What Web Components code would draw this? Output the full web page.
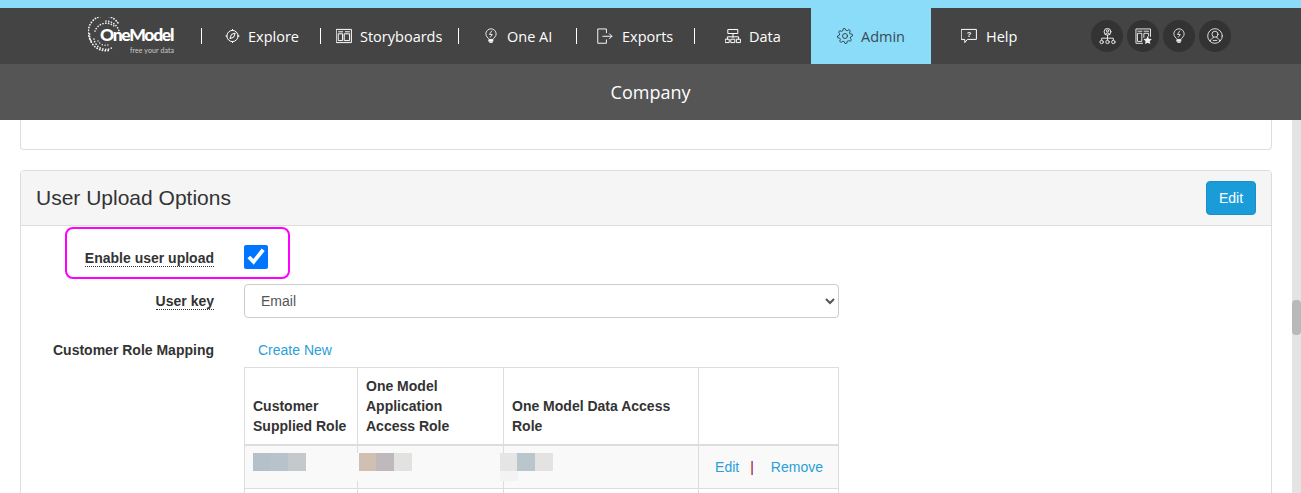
<!DOCTYPE html>
<html>
<head>
<meta charset="utf-8">
<title>Company</title>
<style>
  html, body { margin: 0; height: 493px; overflow: hidden; background: #fff; }
  body { font-family: "Liberation Sans", Arial, sans-serif; font-size: 14px; color: #333; }
</style>
</head>
<body>
<app-shell>
  <top-nav slot="nav">
    <one-logo></one-logo>
    <nav-item icon="explore" w="119" pad="23" gap="7" sep>Explore</nav-item>
    <nav-item icon="boards" w="138" pad="15" gap="8" sep>Storyboards</nav-item>
    <nav-item icon="bulb" w="118" pad="26" gap="10" sep>One AI</nav-item>
    <nav-item icon="exports" w="118" pad="20" gap="9" sep>Exports</nav-item>
    <nav-item icon="data" w="116" pad="30" gap="8">Data</nav-item>
    <nav-item icon="gear" w="120" pad="26" gap="8" active>Admin</nav-item>
    <nav-item icon="help" w="160" pad="30" gap="9">Help</nav-item>
    <round-icon icon="org"></round-icon>
    <round-icon icon="star"></round-icon>
    <round-icon icon="bulb"></round-icon>
    <round-icon icon="user"></round-icon>
  </top-nav>
  <sub-header slot="nav">Company</sub-header>

  <panel-card class="stub"></panel-card>

  <panel-card heading="User Upload Options">
    <e-btn slot="action">Edit</e-btn>
    <form-row label="Enable user upload" hint h="52" boxed>
      <input-check></input-check>
    </form-row>
    <form-row label="User key" hint h="34" mt="5">
      <select-box>Email</select-box>
    </form-row>
    <form-row label="Customer Role Mapping" h="20" mt="22">
      <a-link style="padding-left:14px">Create New</a-link>
    </form-row>
    <role-table></role-table>
  </panel-card>
</app-shell>

<script>
const strokeAttrs = 'fill="none" stroke="currentColor" stroke-width="1" stroke-linecap="round" stroke-linejoin="round"';

function gearPath(cx, cy, r1, r2, teeth) {
  let d = '';
  const step = Math.PI * 2 / teeth;
  for (let i = 0; i < teeth; i++) {
    const a = i * step - step / 2;
    const pts = [
      [r1, a + step * 0.0], [r2, a + step * 0.2], [r2, a + step * 0.5], [r1, a + step * 0.7]
    ];
    pts.forEach(([r, t], j) => {
      const x = (cx + r * Math.cos(t)).toFixed(2), y = (cy + r * Math.sin(t)).toFixed(2);
      d += (i === 0 && j === 0 ? 'M' : 'L') + x + ' ' + y + ' ';
    });
  }
  return d + 'Z';
}

const icons = {
  explore: `<svg width="16" height="16" viewBox="0 0 16 16" ${strokeAttrs}>
    <circle cx="7.5" cy="8" r="5.6"/><path d="M7.5 1.4v1M7.5 13.6v1M.9 8h1M13.1 8h1"/>
    <path d="M10.1 5.4 8.7 9.2 4.9 10.6 6.3 6.8Z"/></svg>`,
  boards: `<svg width="16" height="16" viewBox="0 0 16 16" ${strokeAttrs}>
    <rect x=".6" y="1.4" width="14.8" height="13.2"/><path d="M2.6 3.8h4M9.4 3.8h4"/>
    <rect x="2.6" y="5.8" width="4" height="6.8"/><rect x="8.6" y="5.8" width="5" height="6.8"/></svg>`,
  bulb: `<svg width="12" height="16" viewBox="0 0 14 18" ${strokeAttrs}>
    <path d="M4.4 12.6C3.8 10.8 1 9.8 1 6.6a6 6 0 0 1 12 0c0 3.2-2.8 4.2-3.4 6Z"/>
    <path d="M7.8 3.2 5.2 7.2h3.4L6.2 10.4"/>
    <path d="M4.8 13.6h4.4v1.6H4.8ZM5.6 16.6h2.8" fill="currentColor"/></svg>`,
  exports: `<svg width="16" height="16" viewBox="0 0 17 17" ${strokeAttrs}>
    <path d="M10 5V1H.8v15.2H10v-3.6"/><path d="M6.2 8.8h9.6M13.2 6.2l2.6 2.6-2.6 2.6"/></svg>`,
  data: `<svg width="16" height="16" viewBox="0 0 16 16" ${strokeAttrs}>
    <rect x="3.2" y="1.5" width="9.6" height="4"/><path d="M8 5.5v4M2.4 11V8.8h11.2V11"/>
    <rect x=".6" y="11.2" width="3.6" height="3.4"/><rect x="6.2" y="11.2" width="3.6" height="3.4"/><rect x="11.8" y="11.2" width="3.6" height="3.4"/></svg>`,
  gear: `<svg width="16" height="16" viewBox="0 0 16 16" ${strokeAttrs}>
    <path d="${gearPath(8, 8, 5.7, 7.5, 8)}"/><circle cx="8" cy="8" r="2.5"/></svg>`,
  help: `<svg width="16" height="16" viewBox="0 0 16 16" ${strokeAttrs}>
    <path d="M.6 1.4h14.8v10H6.4L3.8 14.6v-3.2H.6Z"/>
    <text x="8" y="8.8" text-anchor="middle" font-family="Liberation Sans" font-size="7.5" font-weight="700" fill="currentColor" stroke="none">?</text></svg>`,
  org: `<svg width="17" height="17" viewBox="0 0 18 18" ${strokeAttrs}>
    <circle cx="9" cy="4" r="3.6"/><circle cx="9" cy="3" r="1.2"/><path d="M6.6 6.4c.4-1.6 4.4-1.6 4.8 0"/>
    <path d="M9 7.6v5M2.8 12.6v-1.8h12.4v1.8"/>
    <circle cx="2.8" cy="14.8" r="1.8"/><circle cx="9" cy="14.8" r="1.8"/><circle cx="15.2" cy="14.8" r="1.8"/></svg>`,
  star: `<svg width="17" height="17" viewBox="0 0 18 18" ${strokeAttrs}>
    <path d="M8 16.2H1V1h15.4v8"/><path d="M3 3.4h4.4M9.6 3.4h4.8"/>
    <rect x="3" y="5.6" width="4.2" height="8.6"/><path d="M9.4 10V5.6h5v3"/>
    <path d="M13.4 8.4l1.4 2.9 3.1.4-2.3 2.2.6 3.1-2.8-1.5-2.8 1.5.6-3.1-2.3-2.2 3.1-.4Z" fill="currentColor" stroke="none"/></svg>`,
  user: `<svg width="16" height="16" viewBox="0 0 18 18" ${strokeAttrs}>
    <circle cx="9" cy="9" r="8.2"/><circle cx="9" cy="7" r="3.4"/>
    <path d="M3.6 14.6c.8-2.6 2.8-3.6 3.6-3.8M14.4 14.6c-.8-2.6-2.8-3.6-3.6-3.8"/><path d="M7 14h4"/></svg>`
};

class AppShell extends HTMLElement {
  constructor() {
    super();
    this.attachShadow({mode: 'open'}).innerHTML = `
      <style>
        :host { display: block; height: 493px; overflow: hidden; }
        .strip { height: 8px; background: #8adcf9; }
        .body { display: flex; height: 373px; }
        .content { flex: 1; min-width: 0; overflow: hidden; padding: 0 20px; display: flex; flex-direction: column; gap: 20px; }
        .track { width: 9px; background: #e4e4e4; padding-top: 180px; box-sizing: border-box; }
        .thumb { height: 35px; background: #b9b9b9; border-radius: 4px; }
      </style>
      <div class="strip"></div>
      <slot name="nav"></slot>
      <div class="body">
        <div class="content"><slot></slot></div>
        <div class="track"><div class="thumb"></div></div>
      </div>`;
  }
}
customElements.define('app-shell', AppShell);

class TopNav extends HTMLElement {
  constructor() {
    super();
    this.attachShadow({mode: 'open'}).innerHTML = `
      <style>
        :host { display: flex; align-items: stretch; height: 56px; background: #444; padding-left: 88px; gap: 0; }
      </style><slot></slot>`;
  }
}
customElements.define('top-nav', TopNav);

class OneLogo extends HTMLElement {
  constructor() {
    super();
    this.attachShadow({mode: 'open'}).innerHTML = `
      <style>
        :host { display: block; position: relative; width: 114px; flex: none; color: #fff; }
        svg { position: absolute; left: 0; top: 9px; }
        .name { position: absolute; left: 12px; top: 17px; font: 900 17.5px/20px "Lato", sans-serif; letter-spacing: -1.3px; white-space: nowrap; }
        .tag { position: absolute; left: 42px; top: 38px; font: 400 7px/8px "Lato", sans-serif; letter-spacing: .1px; color: #ccc; white-space: nowrap; }
        .sep { position: absolute; right: 0; top: 20px; width: 1px; height: 16px; background: #fff; }
      </style>
      <svg width="36" height="36" viewBox="0 0 36 36" fill="none" stroke="#eee" stroke-linecap="round">
        <path d="M3 24 A16 16 0 0 1 30 6" stroke-width="1.9" stroke-dasharray="0 2.8"/>
        <path d="M7 14 A12 12 0 0 1 26 9" stroke-width="1.7" stroke-dasharray="0 2.8"/>
        <path d="M18 4 A14 14 0 0 1 31 14" stroke-width="1.7" stroke-dasharray="0 2.8"/>
        <path d="M1.5 17 A16 16 0 0 0 22 33" stroke-width="1.9" stroke-dasharray="0 2.8"/>
        <path d="M6 22 A12 12 0 0 0 25 30" stroke-width="1.7" stroke-dasharray="0 2.8"/>
        <path d="M10 24 A9 9 0 0 0 20 28" stroke-width="1.5" stroke-dasharray="0 2.8"/>
      </svg>
      <span class="name">OneModel</span>
      <span class="tag">free your data</span>
      <span class="sep"></span>`;
  }
}
customElements.define('one-logo', OneLogo);

class NavItem extends HTMLElement {
  constructor() {
    super();
    const sh = this.attachShadow({mode: 'open'});
    sh.innerHTML = `
      <style>
        :host { display: flex; align-items: center; position: relative; box-sizing: border-box; flex: none; color: #fff; font: 400 14.5px/20px "Open Sans", sans-serif; }
        :host([active]) { background: #8adcf9; color: #3a4a52; }
        .ic { display: flex; align-items: center; }
        .tx { padding-top: 2px; }
        svg { display: block; }
        .sep { position: absolute; right: 0; top: 20px; width: 1px; height: 16px; background: #fff; }
      </style>
      <span class="ic">${icons[this.getAttribute('icon')]}</span>
      <span class="tx"><slot></slot></span>
      ${this.hasAttribute('sep') ? '<span class="sep"></span>' : ''}`;
    this.style.width = this.getAttribute('w') + 'px';
    this.style.paddingLeft = this.getAttribute('pad') + 'px';
    this.style.gap = this.getAttribute('gap') + 'px';
  }
}
customElements.define('nav-item', NavItem);

class RoundIcon extends HTMLElement {
  constructor() {
    super();
    this.attachShadow({mode: 'open'}).innerHTML = `
      <style>
        :host { display: flex; align-items: center; justify-content: center; flex: none; width: 32px; height: 32px; margin: 12px 4px 0 0; border-radius: 50%; background: #333; color: #eee; }
        svg { display: block; }
      </style>${icons[this.getAttribute('icon')]}`;
  }
}
customElements.define('round-icon', RoundIcon);

class SubHeader extends HTMLElement {
  constructor() {
    super();
    this.attachShadow({mode: 'open'}).innerHTML = `
      <style>
        :host { display: flex; align-items: center; justify-content: center; height: 56px; background: #555; color: #fff; font: 400 18px/24px "Open Sans", sans-serif; }
      </style><slot></slot>`;
  }
}
customElements.define('sub-header', SubHeader);

class PanelCard extends HTMLElement {
  constructor() {
    super();
    const heading = this.getAttribute('heading');
    this.attachShadow({mode: 'open'}).innerHTML = `
      <style>
        :host { display: block; flex: none; box-sizing: border-box; border: 1px solid #ddd; border-radius: 4px; background: #fff; }
        :host(.stub) { height: 30px; border-top: 0; border-radius: 0 0 4px 4px; }
        .head { display: flex; align-items: center; justify-content: space-between; height: 54px; padding: 0 15px; background: #f5f5f5; border-bottom: 1px solid #ddd; border-radius: 3px 3px 0 0; }
        h3 { margin: 0; font: 400 21px/24px "Liberation Sans", sans-serif; color: #333; }
        .body { position: relative; padding-top: 1px; }
      </style>
      ${heading ? `<div class="head"><h3>${heading}</h3><slot name="action"></slot></div>` : ''}
      <div class="body"><slot></slot></div>`;
  }
}
customElements.define('panel-card', PanelCard);

class EBtn extends HTMLElement {
  constructor() {
    super();
    this.attachShadow({mode: 'open'}).innerHTML = `
      <style>
        :host { display: flex; align-items: center; justify-content: center; width: 50px; height: 34px; box-sizing: border-box; background: #1a9cd9; border: 1px solid #1a8fc7; border-radius: 4px; color: #fff; font: 400 14px/20px "Liberation Sans", sans-serif; }
      </style><slot></slot>`;
  }
}
customElements.define('e-btn', EBtn);

class FormRow extends HTMLElement {
  constructor() {
    super();
    const boxed = this.hasAttribute('boxed');
    const hint = this.hasAttribute('hint');
    this.attachShadow({mode: 'open'}).innerHTML = `
      <style>
        :host { display: grid; box-sizing: border-box; grid-template-columns: 193px 1fr; column-gap: 30px; align-items: center; position: relative; }
        label { justify-self: end; font: 700 14px/16px "Liberation Sans", sans-serif; color: #333; white-space: nowrap; }
        label.hint { border-bottom: 1px dotted #333; line-height: 15px; padding-top: 2px; }
        .box { position: absolute; left: 44px; top: 0; width: 225px; height: 52px; box-sizing: border-box; border: 2px solid #f0f; border-radius: 8px; pointer-events: none; }
        .ctl { display: flex; width: 595px; }
      </style>
      <label class="${hint ? 'hint' : ''}">${this.getAttribute('label')}</label>
      <div class="ctl"><slot></slot></div>
      ${boxed ? '<span class="box"></span>' : ''}`;
    this.style.height = this.getAttribute('h') + 'px';
    if (this.getAttribute('mt')) this.style.marginTop = this.getAttribute('mt') + 'px';
    if (boxed) this.style.paddingTop = '10px';
  }
}
customElements.define('form-row', FormRow);

class InputCheck extends HTMLElement {
  constructor() {
    super();
    this.attachShadow({mode: 'open'}).innerHTML = `
      <style>
        :host { display: block; height: 24px; margin-bottom: 2px; }
        input { display: block; width: 24px; height: 24px; margin: 0; accent-color: #0075ff; }
      </style><input type="checkbox" checked>`;
  }
}
customElements.define('input-check', InputCheck);

class SelectBox extends HTMLElement {
  constructor() {
    super();
    this.attachShadow({mode: 'open'}).innerHTML = `
      <style>
        :host { display: block; width: 595px; }
        select { display: block; width: 100%; height: 34px; box-sizing: border-box; padding: 0 12px; background: #fff; border: 1px solid #ccc; border-radius: 4px; color: #555; font: 400 14px/20px "Liberation Sans", sans-serif; }
      </style><select><option>${this.textContent.trim()}</option></select>`;
  }
}
customElements.define('select-box', SelectBox);

class ALink extends HTMLElement {
  constructor() {
    super();
    this.attachShadow({mode: 'open'}).innerHTML = `
      <style>
        :host { color: #2a9fd8; font: 400 14px/20px "Liberation Sans", sans-serif; white-space: nowrap; }
      </style><slot></slot>`;
  }
}
customElements.define('a-link', ALink);

class BlurBlock extends HTMLElement {
  constructor() {
    super();
    const cols = this.getAttribute('cols').split(' ');
    this.attachShadow({mode: 'open'}).innerHTML = `
      <style>
        :host { position: absolute; display: flex; top: 7px; height: 18px; }
        span { display: block; width: 18px; height: 18px; }
        span:nth-child(2) { width: 17px; }
      </style>${cols.map(c => `<span style="background:${c}"></span>`).join('')}`;
    this.style.left = this.getAttribute('x') + 'px';
  }
}
customElements.define('blur-block', BlurBlock);

class RoleTable extends HTMLElement {
  constructor() {
    super();
    this.attachShadow({mode: 'open'}).innerHTML = `
      <style>
        :host { display: block; margin: 7px 0 0 223px; width: 595px; }
        table { width: 594px; table-layout: fixed; border-collapse: collapse; font: 400 14px/20px "Liberation Sans", sans-serif; color: #333; }
        th, td { border: 1px solid #ddd; box-sizing: border-box; }
        th { font-weight: 700; font-size: 14px; text-align: left; vertical-align: bottom; padding: 8px 12px 8px 8px; border-bottom-width: 2px; }
        th:first-child { padding-right: 8px; }
        td { height: 43px; position: relative; padding: 0; }
        tbody tr:first-child td { background: #f9f9f9; }
        .cover { position: absolute; left: -2px; top: 7px; width: 3px; height: 28px; background: #f9f9f9; }
        .ghost { position: absolute; left: -4px; top: 25px; width: 18px; height: 10px; background: #f3f3f3; }
        .acts { display: flex; justify-content: flex-end; padding-right: 15px; color: #2a9fd8; }
        .bar { color: #a50034; margin: 0 17px 0 11px; }
      </style>
      <table>
        <colgroup><col style="width:113px"><col style="width:146px"><col style="width:195px"><col style="width:140px"></colgroup>
        <thead><tr>
          <th>Customer Supplied Role</th>
          <th>One Model Application Access Role</th>
          <th>One Model Data Access Role</th>
          <th></th>
        </tr></thead>
        <tbody>
          <tr>
            <td><blur-block x="8" cols="#b5c1ca #b7c2cb #c4c9cc"></blur-block></td>
            <td><span class="cover"></span><blur-block x="1" cols="#d1bfb2 #bfb8bd #e2e2e0"></blur-block></td>
            <td><span class="cover"></span><span class="ghost"></span><blur-block x="-4" cols="#e5e5e5 #b9c7cc #e4e3e1"></blur-block></td>
            <td><div class="acts"><span>Edit</span><span class="bar">|</span><span>Remove</span></div></td>
          </tr>
          <tr><td></td><td></td><td></td><td></td></tr>
        </tbody>
      </table>`;
  }
}
customElements.define('role-table', RoleTable);
</script>
</body>
</html>
